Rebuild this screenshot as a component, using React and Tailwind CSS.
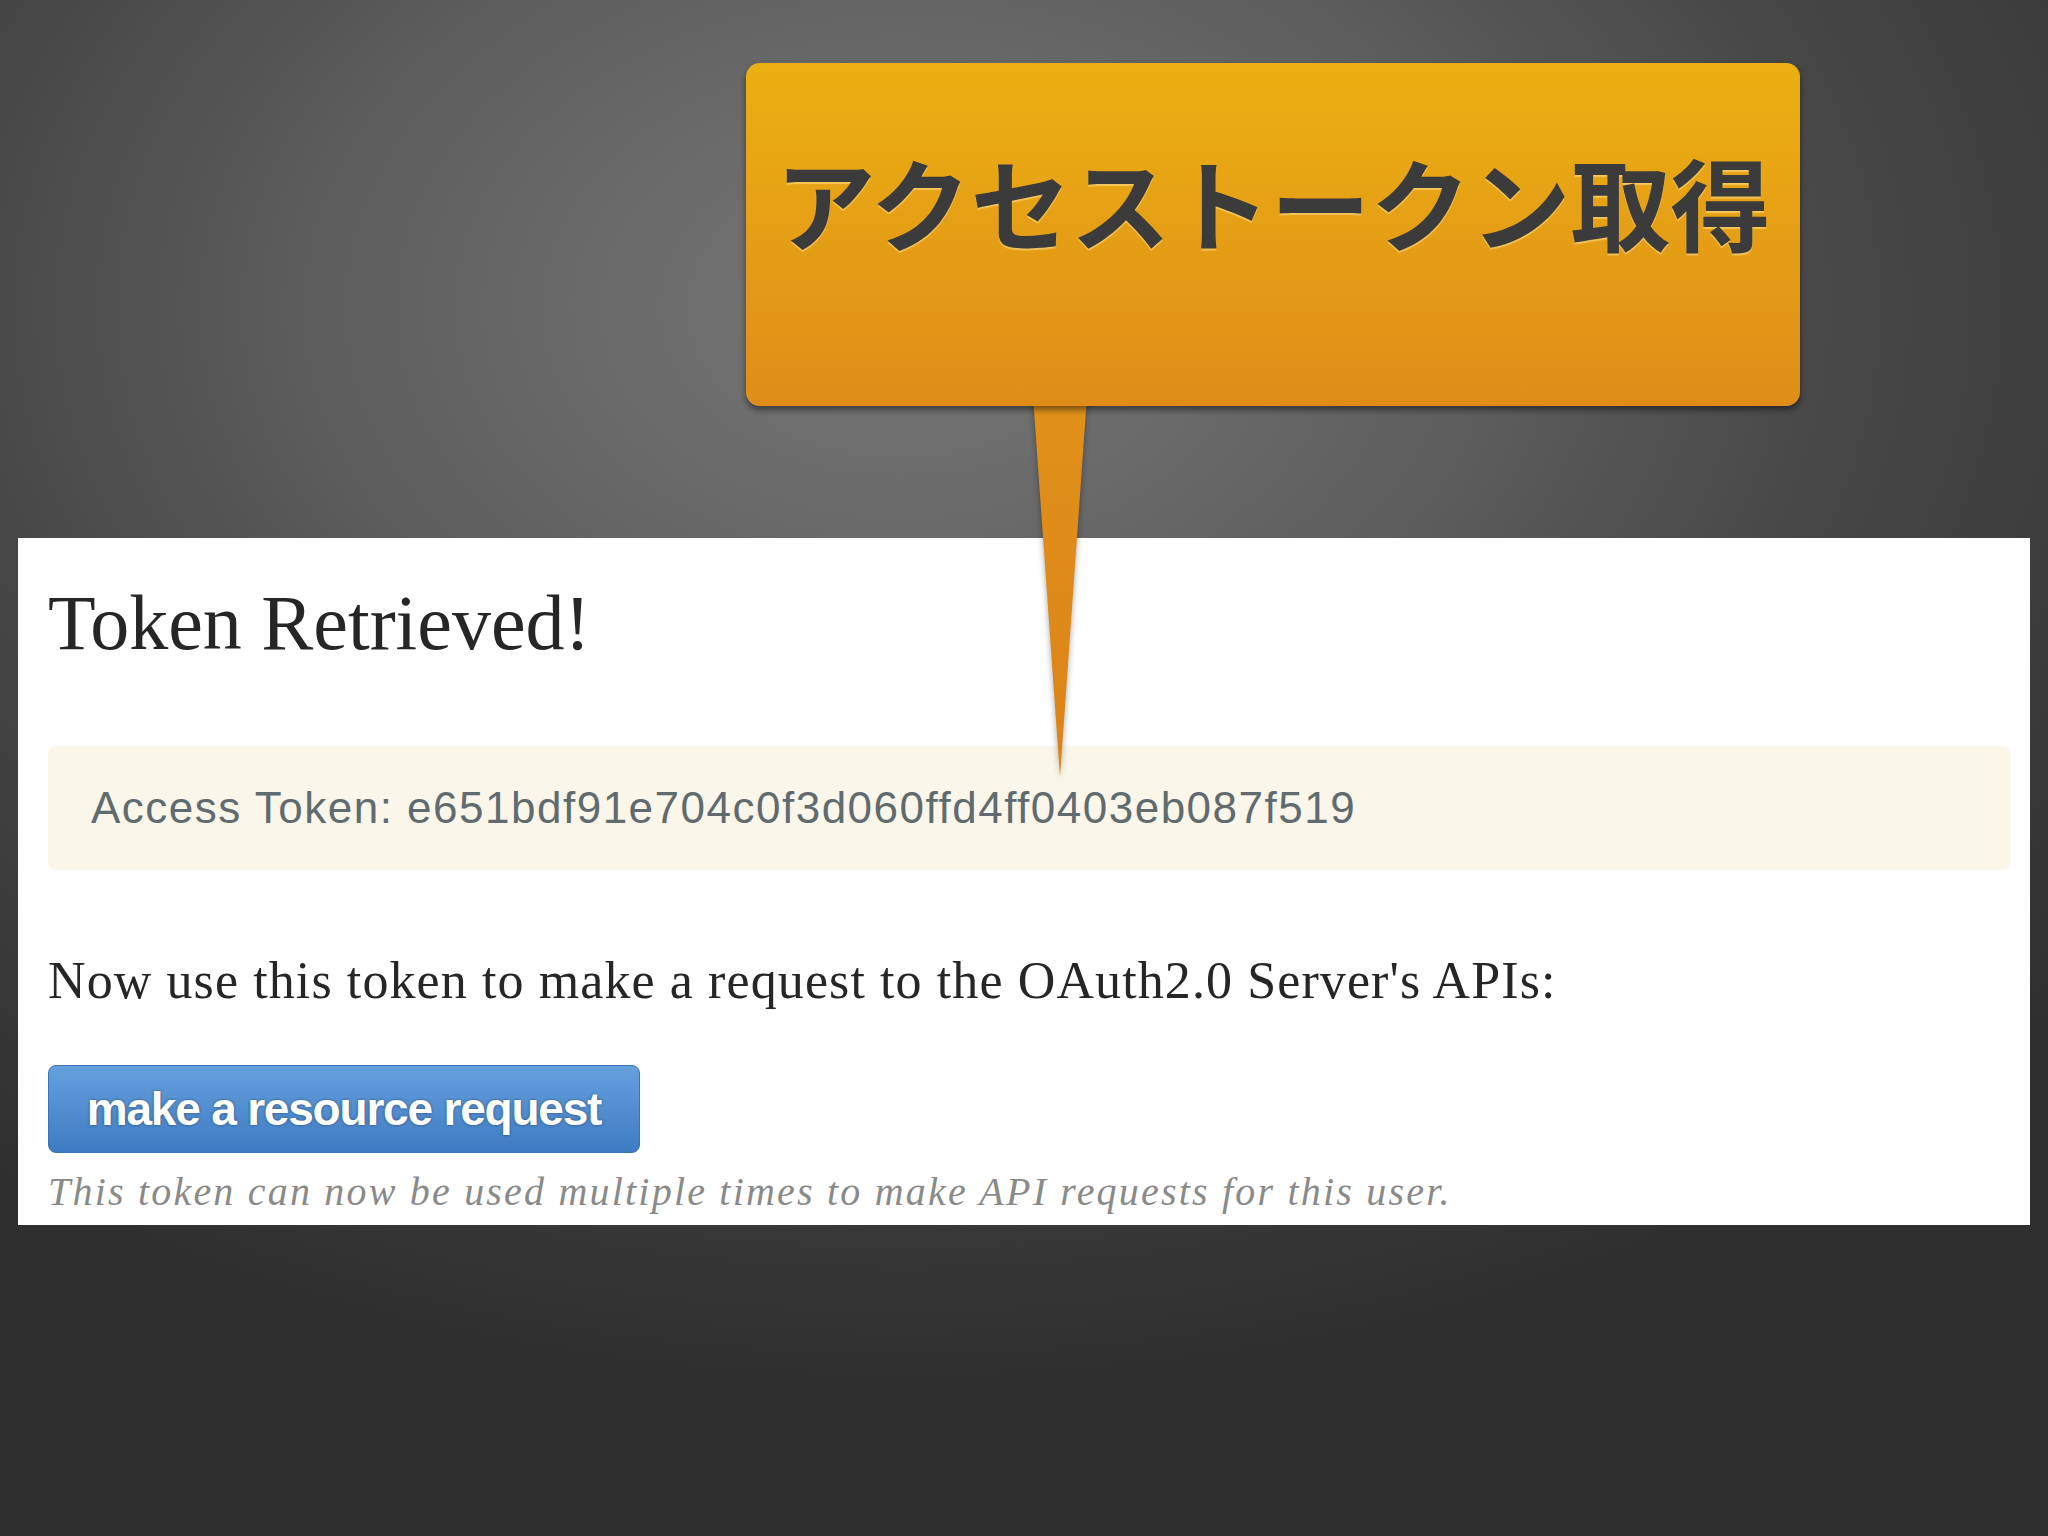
import React from 'react';

function Callout() {
  return (
    <>
      {/* tail of the speech bubble */}
      <svg
        className="absolute left-[1020px] top-[396px] drop-shadow-[0_2px_3px_rgba(0,0,0,0.35)]"
        width="80"
        height="390"
        viewBox="0 0 80 390"
      >
        <defs>
          <linearGradient id="tail" x1="0" y1="0" x2="0" y2="1">
            <stop offset="0%" stopColor="#e1911a" />
            <stop offset="100%" stopColor="#db8318" />
          </linearGradient>
        </defs>
        <polygon points="13,0 67,0 40,381" fill="url(#tail)" />
      </svg>

      <div className="absolute left-[746px] top-[63px] w-[1054px] h-[343px] rounded-[14px] bg-gradient-to-b from-[#ebb011] to-[#df8d18] shadow-[0_4px_6px_rgba(0,0,0,0.45)] pt-[88px] flex justify-center">
        <h1 className="font-['Noto_Sans_CJK_JP','Noto_Sans',sans-serif] text-[100px] leading-none font-bold text-[#3b3b3b] [text-shadow:0_2px_1px_rgba(255,226,150,0.55)]">
          アクセストークン取得
        </h1>
      </div>
    </>
  );
}

export default function App() {
  return (
    <div className="relative w-[2048px] h-[1536px] overflow-hidden bg-[#2f2f2f] bg-[radial-gradient(ellipse_75%_70%_at_44%_20%,#777777_0%,#606060_35%,#474747_62%,#2f2f2f_100%)] pt-[538px] pl-[18px]">
      <div className="w-[2012px] h-[687px] bg-white pl-[30px] pr-[19px] pt-[46px]">
        <h2 className="font-['Liberation_Serif','DejaVu_Serif',serif] text-[78px] leading-none text-[#262626]">
          Token Retrieved!
        </h2>

        <div className="mt-[84px] h-[124px] rounded-lg bg-[#fbf6ea] pl-[43px] pt-[40px]">
          <p className="font-['Liberation_Sans',Arial,sans-serif] text-[44px] leading-none tracking-[1.5px] text-[#5f6b6e]">
            Access Token: e651bdf91e704c0f3d060ffd4ff0403eb087f519
          </p>
        </div>

        <p className="mt-[85px] font-['Liberation_Serif','DejaVu_Serif',serif] text-[52px] leading-none tracking-[1.1px] text-[#262626]">
          Now use this token to make a request to the OAuth2.0 Server's APIs:
        </p>

        <button className="mt-[58px] flex h-[88px] w-[592px] items-center justify-center rounded-lg border border-[#3a73b6] bg-gradient-to-b from-[#65a0de] to-[#3f7bc2] font-['Liberation_Sans',Arial,sans-serif] text-[46px] leading-none font-bold tracking-[-1.2px] text-white [text-shadow:0_0_3px_rgba(0,0,0,0.45)]">
          make a resource request
        </button>

        <p className="mt-[19px] font-['Liberation_Serif','DejaVu_Serif',serif] text-[40px] leading-none italic tracking-[2.2px] text-[#8a8a8a]">
          This token can now be used multiple times to make API requests for this user.
        </p>
      </div>

      <Callout />
    </div>
  );
}
